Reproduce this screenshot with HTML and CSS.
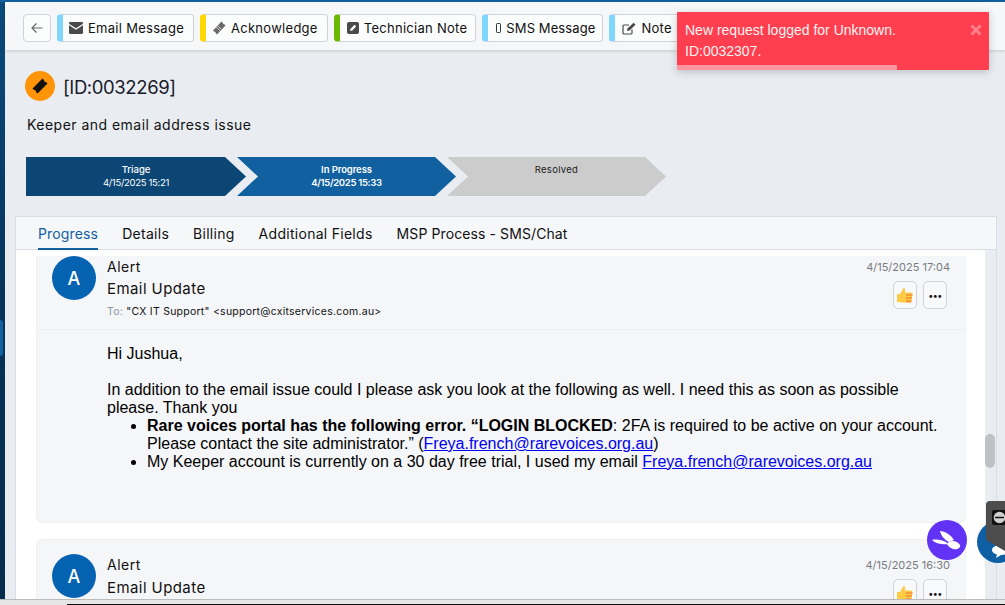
FILE: index.html
```html
<!DOCTYPE html>
<html lang="en">
<head>
<meta charset="utf-8">
<title>Request 0032269</title>
<link rel="stylesheet" href="styles.css">
</head>
<body>
<div class="topline"></div>
<div class="shell">
  <aside class="rail"><span class="rail-tab"></span></aside>
  <main class="main">
    <nav class="toolbar">
      <button class="back"><svg width="14" height="14" viewBox="0 0 14 14"><path d="M12.500 7H2M6.500 2.500L2 7l4.500 4.500" fill="none" stroke="#666" stroke-width="1.200"/></svg></button>
      <button class="act blue"><svg class="ico" width="14" height="12" viewBox="0 0 14 12"><path d="M1.200 0h11.600c.7 0 1.200.5 1.200 1.200v.5L7 6.200 0 1.700v-.5C0 .5.500 0 1.200 0zM0 3.200l7 4.500 7-4.500v7.600c0 .7-.5 1.200-1.200 1.200H1.200C.5 12 0 11.500 0 10.800z" fill="#4a4a4a"/></svg>Email Message</button>
      <button class="act yellow"><svg class="ico" width="14" height="14" viewBox="0 0 14 14"><path d="M9.500 .5l1.300 1.300a1.300 1.300 0 0 0 1.400 1.400l1.300 1.300L5 13.500l-1.300-1.300a1.300 1.300 0 0 0-1.400-1.400L1 9.500z" fill="#6b6b6b"/><path d="M5.700 4.800l3.500 3.500M4.400 6.200l3.500 3.500" stroke="#e4e4e4" stroke-width=".9"/></svg>Acknowledge</button>
      <button class="act green tech"><svg class="ico" width="12" height="12" viewBox="0 0 12 12"><rect width="12" height="12" rx="2" fill="#4a4a4a"/><path d="M3 9l.6-2.300L7.500 2.800l1.700 1.700-3.900 3.900z" fill="#fff"/></svg>Technician Note</button>
      <button class="act blue sms"><svg class="ico" width="5" height="10" viewBox="0 0 5 10"><rect x=".5" y=".5" width="4" height="9" rx=".8" fill="none" stroke="#333" stroke-width="1"/></svg>SMS Message</button>
      <button class="act blue note"><svg class="ico" width="14" height="13" viewBox="0 0 14 13"><path d="M10 7.500V11a1 1 0 0 1-1 1H2a1 1 0 0 1-1-1V4a1 1 0 0 1 1-1h5" fill="none" stroke="#4a4a4a" stroke-width="1.200"/><path d="M5 9l.5-2.500L11.500.8l2 2-6 5.700z" fill="#4a4a4a"/></svg>Note</button>
    </nav>

    <section class="head">
      <div class="idrow">
        <span class="ticket"><svg width="18" height="18" viewBox="0 0 18 18"><path d="M11.500 1.500l1.500 1.500a1.800 1.800 0 0 0 2 2l1.500 1.500L6.500 16.500 5 15a1.800 1.800 0 0 0-2-2l-1.500-1.500z" fill="#111"/></svg></span>
        <h1 class="idtext">[ID:0032269]</h1>
      </div>
      <p class="subject">Keeper and email address issue</p>
      <ol class="steps">
        <li class="step s1"><b>Triage</b><span>4/15/2025 15:21</span></li>
        <li class="step s2"><b>In Progress</b><span>4/15/2025 15:33</span></li>
        <li class="step s3"><b>Resolved</b></li>
      </ol>
    </section>

    <section class="panel">
      <div class="tabs">
        <a class="tab active">Progress</a>
        <a class="tab">Details</a>
        <a class="tab">Billing</a>
        <a class="tab">Additional Fields</a>
        <a class="tab long">MSP Process - SMS/Chat</a>
      </div>
      <div class="feed">
        <div class="track"><span class="thumb"></span></div>
        <article class="card first">
          <header class="chead">
            <span class="avatar">A</span>
            <div class="who">
              <div class="name">Alert</div>
              <div class="kind">Email Update</div>
              <div class="to"><span class="tolabel">To:</span> "CX IT Support" &lt;support@cxitservices.com.au&gt;</div>
            </div>
            <div class="meta">
              <time class="when">4/15/2025 17:04</time>
              <div class="btns">
                <button class="mini"><svg width="18" height="18" viewBox="0 0 18 18"><path d="M1 8h3v8H1z" fill="#ffca45"/><path d="M4 8l3.500-6c1.300 0 2 1 1.700 2.300L8.800 6.500H15a1.500 1.500 0 0 1 1.500 1.500l-1 7a1.500 1.500 0 0 1-1.500 1.500H4z" fill="#ffca45"/><path d="M10 8h6.500l-.3 2H10zM10 11h6l-.3 2H10zM10 14h5.500l-.3 2.500H10z" fill="#f59d3a"/></svg></button>
                <button class="mini dots">•••</button>
              </div>
            </div>
          </header>
          <div class="body">
            <p>Hi Jushua,</p>
            <p class="gap">In addition to the email issue could I please ask you look at the following as well. I need this as soon as possible please. Thank you</p>
            <ul>
              <li><strong>Rare voices portal has the following error. “LOGIN BLOCKED</strong>: 2FA is required to be active on your account. Please contact the site administrator.” (<a href="#">Freya.french@rarevoices.org.au</a>)</li>
              <li>My Keeper account is currently on a 30 day free trial, I used my email <a href="#">Freya.french@rarevoices.org.au</a></li>
            </ul>
          </div>
        </article>
        <article class="card second">
          <header class="chead">
            <span class="avatar">A</span>
            <div class="who">
              <div class="name">Alert</div>
              <div class="kind">Email Update</div>
            </div>
            <div class="meta">
              <time class="when">4/15/2025 16:30</time>
              <div class="btns">
                <button class="mini"><svg width="18" height="18" viewBox="0 0 18 18"><path d="M1 8h3v8H1z" fill="#ffca45"/><path d="M4 8l3.500-6c1.300 0 2 1 1.700 2.300L8.800 6.500H15a1.500 1.500 0 0 1 1.500 1.500l-1 7a1.500 1.500 0 0 1-1.500 1.500H4z" fill="#ffca45"/><path d="M10 8h6.500l-.3 2H10zM10 11h6l-.3 2H10zM10 14h5.500l-.3 2.500H10z" fill="#f59d3a"/></svg></button>
                <button class="mini dots">•••</button>
              </div>
            </div>
          </header>
        </article>
      </div>
    </section>
  </main>
</div>
<div class="bottom"><span class="black"></span></div>

<div class="toast">
  <p>New request logged for Unknown.<br>ID:0032307.</p>
  <svg class="close" width="12" height="12" viewBox="0 0 12 12"><path d="M1.500 1.500l9 9M10.500 1.500l-9 9" stroke="#ff7f8a" stroke-width="3"/></svg>
  <span class="progress"></span>
</div>

<span class="rabbit"><svg width="40" height="40" viewBox="0 0 40 40"><path d="M13 11c5 0 11 4 14 9l-5 2c-4-2-8-6-9-11z" fill="#fff"/><path d="M5 20c5-1 10 0 14 2l2 2c-5 1-12 0-16-4z" fill="#fff"/><path d="M20 24c2-4 10-4 13 1 1 3-3 5-7 4-3-1-5-3-6-5z" fill="#fff"/></svg></span>
<span class="chat"><svg width="24" height="14" viewBox="0 0 24 14"><path d="M6 6c0-3 4-5 9-5s9 2 9 5-4 5-9 5l-5 3 1-3.500C8 9.500 6 8 6 6z" fill="#fff"/></svg></span>
<span class="tv"><svg width="15" height="15" viewBox="0 0 15 15"><rect width="15" height="15" rx="2" fill="#111"/><circle cx="7.500" cy="7.500" r="5.800" fill="#cfcfcf"/><path d="M3 7.500h9" stroke="#111" stroke-width="1.600"/></svg></span>
</body>
</html>
```
FILE: styles.css
```css
* { box-sizing: border-box; }
html, body { margin: 0; height: 605px; overflow: hidden; }
body {
  position: relative;
  display: flex;
  flex-direction: column;
  background: #fff;
  font-family: "Inter", "Liberation Sans", sans-serif;
  color: #111;
}
button { font: inherit; color: inherit; background: none; padding: 0; cursor: pointer; }
p, h1, ol, ul { margin: 0; padding: 0; }

.topline { height: 2px; flex: none; background: #11609f; }
.shell { flex: 1; display: flex; min-height: 0; }
.rail {
  width: 5px; flex: none; position: relative;
  background: linear-gradient(180deg, #0a4a7c 0%, #06335a 50%, #062c4c 100%);
}
.rail-tab {
  position: absolute; left: 0; top: 318px; width: 3px; height: 36px;
  background: #11609f; border-radius: 0 3px 3px 0;
}
.main { flex: 1; min-width: 0; display: flex; flex-direction: column; background: #e9edf2; }

.toolbar {
  height: 48px; flex: none;
  display: flex; align-items: center; gap: 6px;
  padding: 4px 0 0 18px;
  background: #f5f7f9;
  box-shadow: 0 1px 3px rgba(0,0,0,.16);
  position: relative;
}
.back {
  width: 28px; height: 28px;
  display: flex; align-items: center; justify-content: center;
  border: 1px solid #cfd3d6; border-radius: 4px; background: #fbfcfc;
}
.act {
  height: 28px;
  display: flex; align-items: center; gap: 5px;
  padding: 0 9px 0 6px;
  border: 1px solid #cfd3d6; border-left-width: 6px; border-radius: 4px;
  background: #fbfcfc;
  font-size: 13px; letter-spacing: .28px; white-space: nowrap;
}
.act.blue { border-left-color: #7fd6ff; }
.act.yellow { border-left-color: #ffd800; }
.act.green { border-left-color: #6ab800; }
.act.tech { padding: 0 8px 0 7px; }
.act.sms { padding: 0 7px 0 8px; letter-spacing: .1px; }
.act.note { padding-left: 7px; }

.head { flex: none; height: 166px; padding: 21px 0 0 20px; }
.idrow { display: flex; align-items: center; gap: 8px; height: 30px; }
.ticket {
  width: 30px; height: 30px; border-radius: 50%; background: #ff9408;
  display: flex; align-items: center; justify-content: center;
}
.idtext { font-size: 18.500px; font-weight: 400; letter-spacing: -.4px; color: #1a1a2a; padding-top: 2px; }
.subject { margin: 14px 0 0 2px; font-size: 14px; line-height: 20px; letter-spacing: .47px; }

.steps { display: flex; list-style: none; margin: 22px 0 0 1px; }
.step {
  width: 219px; height: 39px; margin-right: -9px;
  display: flex; flex-direction: column; align-items: center;
  padding: 6px 0 0;
  font-size: 9.500px; line-height: 13px;
  clip-path: polygon(0 0, calc(100% - 21px) 0, 100% 50%, calc(100% - 21px) 100%, 0 100%, 21px 50%);
}
.step b { font-weight: 500; }
.step span { letter-spacing: -.3px; }
.s1 {
  width: 220px;
  background: #0b4675; color: #fff;
  clip-path: polygon(0 0, 199px 0, 220px 50%, 199px 100%, 0 100%);
}
.s2 { background: #11609f; color: #fff; font-weight: 600; }
.s2 b { font-weight: 600; letter-spacing: -.1px; }
.s3 { background: #cccccc; color: #222; }
.s3 b { font-weight: 400; letter-spacing: .3px; }

.panel {
  flex: 1; min-height: 0;
  margin: 0 8px 0 10px;
  display: flex; flex-direction: column;
  border: 1px solid #d8dee5; border-bottom: 0;
  background: #fff;
}
.tabs {
  height: 33px; flex: none;
  display: flex; gap: 24px; padding: 0 0 0 22px;
  background: #f5f7f9;
  border-bottom: 1px solid #d8dee5;
}
.tab { font-size: 14px; line-height: 33px; letter-spacing: .28px; white-space: nowrap; height: 33px; }
.tab.active { color: #11609f; border-bottom: 2px solid #11609f; letter-spacing: .15px; }
.tab.long { letter-spacing: .1px; }

.feed { flex: 1; min-height: 0; position: relative; overflow: hidden; padding: 6px 30px 0 20px; }
.track { position: absolute; right: 0; top: 0; bottom: 0; width: 11px; background: #e9edf2; }
.thumb { position: absolute; left: 0; top: 184px; width: 10px; height: 34px; border-radius: 5px; background: #bfc2c5; }
.card { background: #f5f6f8; border-radius: 0 0 6px 6px; border: 1px solid #eef0f2; border-top: 0; }
.first { height: 267px; }
.second { margin-top: 16px; border-top: 1px solid #eef0f2; border-radius: 6px 6px 0 0; height: 80px; }
.chead { position: relative; display: flex; gap: 11px; padding: 0 15px; height: 74px; border-bottom: 1px solid #eceef0; }
.second .chead { border-bottom: 0; padding-top: 14px; height: 90px; }
.avatar {
  width: 44px; height: 44px; flex: none;
  border-radius: 50%; background: #0663b2; color: #fff;
  display: flex; align-items: center; justify-content: center;
  font-size: 18px; font-weight: 500;
}
.who { flex: 1; font-size: 14px; }
.name { line-height: 22px; letter-spacing: .5px; }
.kind { line-height: 22px; letter-spacing: .42px; font-size: 15px; }
.second .kind { margin-top: 1px; }
.to { margin-top: 4px; font-size: 10.500px; line-height: 16px; letter-spacing: .25px; }
.tolabel { color: #8a96a6; }
.meta { display: flex; flex-direction: column; align-items: flex-end; }
.when { font-size: 11px; line-height: 22px; color: #777c85; }
.btns { display: flex; gap: 6px; margin: 3px 3px 0 0; }
.mini {
  width: 24px; height: 28px; display: flex; align-items: center; justify-content: center;
  border: 1px solid #cfd3d6; border-radius: 5px; background: #f8f9fa;
}
.dots { font-size: 9px; letter-spacing: -.5px; color: #111; }
.body { padding: 15px 15px 0 70px; font-family: "Liberation Sans", Arial, sans-serif; font-size: 16px; line-height: 18px; color: #000; }
.gap { margin-top: 18px; }
.body ul { padding-left: 40px; }
.body a { color: #00e; text-decoration: underline; }

.bottom { height: 6px; flex: none; background: #e6e6e6; border-top: 1px solid #bbb; position: relative; }
.black { position: absolute; left: 67px; right: 0; bottom: 0; height: 1px; background: #111; }

.toast {
  position: absolute; left: 677px; top: 12px; width: 312px; height: 58px;
  background: #ff3e4f; color: #fff3f3;
  box-shadow: 0 2px 8px rgba(0,0,0,.2);
  font-family: "Liberation Sans", Arial, sans-serif;
  font-size: 14px; line-height: 21px;
  padding: 8px 8px;
  border-radius: 1px;
}
.close { position: absolute; right: 7px; top: 12px; }
.progress { position: absolute; left: 0; bottom: 0; width: 220px; height: 5px; background: #ff969f; }

.rabbit {
  position: absolute; left: 927px; top: 520px; width: 40px; height: 40px; border-radius: 50%;
  background: #6233f5; display: flex;
}
.chat {
  position: absolute; left: 977px; top: 521px; width: 42px; height: 42px; border-radius: 50%;
  background: #0e5fa3; display: flex; align-items: flex-end; justify-content: center; padding-bottom: 5px;
}
.tv {
  position: absolute; left: 986px; top: 501px; width: 19px; height: 50px;
  background: #4d4d4d; border-radius: 4px 0 0 4px;
  padding: 8px 0 0 6px;
  clip-path: polygon(0 0, 100% 0, 100% 100%, 0 78%);
}
```
